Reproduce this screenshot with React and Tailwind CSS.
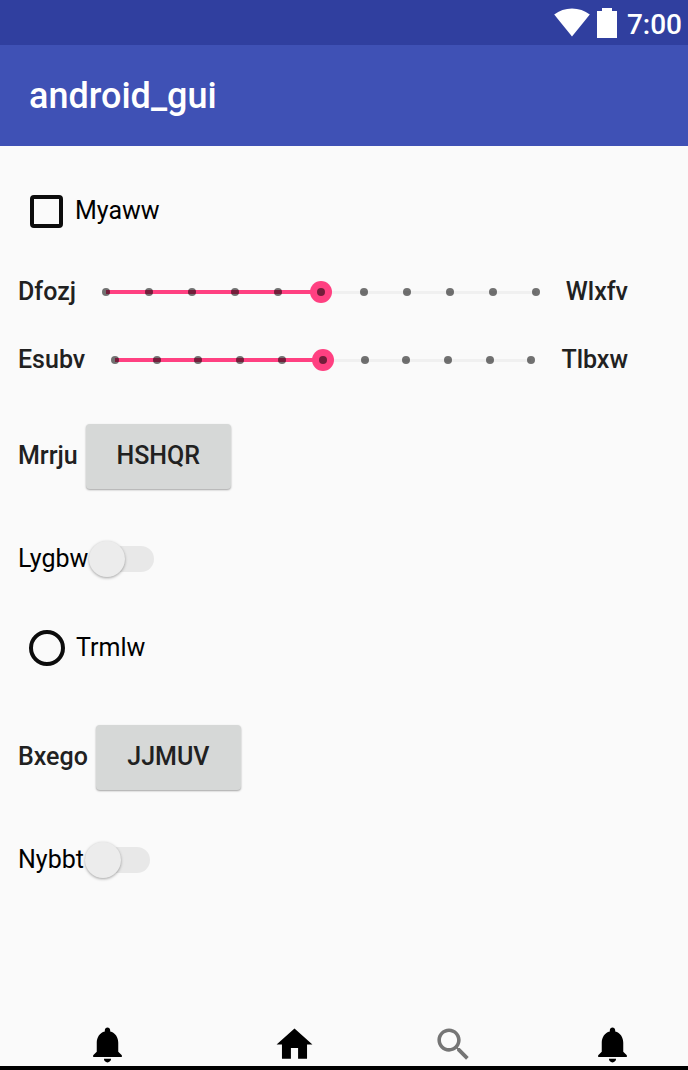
import { useState } from "react";

const BELL =
  "M12 22c1.1 0 2-.9 2-2h-4c0 1.1.9 2 2 2zm6-6v-5c0-3.07-1.63-5.64-4.5-6.32V4c0-.83-.67-1.5-1.5-1.5s-1.5.67-1.5 1.5v.68C7.64 5.36 6 7.92 6 11v5l-2 2v1h16v-1l-2-2z";
const HOME = "M10 20v-6h4v6h5v-8h3L12 3 2 12h3v8z";
const SEARCH =
  "M15.5 14h-.79l-.28-.27C15.41 12.59 16 11.11 16 9.5 16 5.91 13.09 3 9.5 3S3 5.91 3 9.5 5.91 16 9.5 16c1.61 0 3.09-.59 4.23-1.57l.27.28v.79l5 4.99L20.49 19l-4.99-5zm-6 0C7.01 14 5 11.99 5 9.5S7.01 5 9.5 5 14 7.01 14 9.5 11.99 14 9.5 14z";

function StatusBar() {
  return (
    <div className="flex h-[45px] items-center justify-end bg-[#303f9f] pr-[6px] text-white">
      <svg className="mr-[7px] h-[29px] w-9" viewBox="0 0 36 29" fill="currentColor" aria-hidden="true">
        <path d="M18 28.5 0.2 6.6C5.2 2.6 11.4 0.5 18 0.5s12.800 2.100 17.800 6.100z" />
      </svg>
      <svg className="mr-[10px] h-[30px] w-5" viewBox="0 0 20 30" fill="currentColor" aria-hidden="true">
        <path d="M5 0h10v3h5v27H0V3h5z" />
      </svg>
      <span className="pt-1 text-[28px] leading-8 font-medium">7:00</span>
    </div>
  );
}

function DiscreteSlider({ start, end }) {
  const [value, setValue] = useState(5);
  return (
    <div className="flex h-[68px] items-center gap-[19px] pr-[42px] font-medium text-[#212121]">
      <span>{start}</span>
      <div className="relative flex h-6 flex-1 items-center">
        <div className="absolute inset-x-[11px] h-[3px] bg-[#f0f0f0]" />
        <div className="absolute inset-x-[11px] h-1">
          <div className="h-full bg-[#ff4081]" style={{ width: `${value * 10}%` }} />
        </div>
        <input
          type="range"
          min="0"
          max="10"
          value={value}
          onChange={(e) => setValue(Number(e.target.value))}
          aria-label={`${start} to ${end}`}
          className="relative m-0 h-6 w-full cursor-pointer appearance-none bg-transparent [&::-webkit-slider-thumb]:size-[22px] [&::-webkit-slider-thumb]:appearance-none [&::-webkit-slider-thumb]:rounded-full [&::-webkit-slider-thumb]:bg-[#ff4081]"
        />
        <div className="pointer-events-none absolute inset-0 flex items-center justify-between px-[7px]">
          {Array.from({ length: 11 }, (_, i) => (
            <span key={i} className="size-2 rounded-full bg-black/55" />
          ))}
        </div>
      </div>
      <span>{end}</span>
    </div>
  );
}

function ButtonRow({ label, action }) {
  return (
    <div className="flex h-[66px] items-center gap-2 font-medium text-[#212121]">
      <span>{label}</span>
      <button
        type="button"
        className="h-[65px] w-[145px] rounded-[4px] bg-[#d6d8d7] shadow-[0_1px_2px_rgba(0,0,0,0.35)]"
      >
        {action}
      </button>
    </div>
  );
}

function SwitchRow({ label }) {
  return (
    <label className="flex h-10 w-fit cursor-pointer items-center text-black">
      <span>{label}</span>
      <input
        type="checkbox"
        role="switch"
        className="relative ml-[6px] h-[26px] w-[60px] cursor-pointer appearance-none rounded-full bg-[#e8e8e8] before:absolute before:top-[-5px] before:left-[-5px] before:size-9 before:rounded-full before:bg-[#ececec] before:shadow-[0_1px_3px_rgba(0,0,0,0.35)] checked:bg-[#ff4081]/50 checked:before:left-[29px] checked:before:bg-[#ff4081]"
      />
    </label>
  );
}

function NavButton({ label, path, className }) {
  return (
    <button type="button" aria-label={label} className={className}>
      <svg className="size-[43px]" viewBox="0 0 24 24" fill="currentColor" aria-hidden="true">
        <path d={path} />
      </svg>
    </button>
  );
}

export default function App() {
  return (
    <div className="flex min-h-screen flex-col bg-[#fafafa] font-['Roboto',sans-serif] text-[25px] leading-8">
      <StatusBar />
      <header className="flex h-[101px] items-center bg-[#3f51b5] px-[29px]">
        <h1 className="text-[36px] leading-10 font-medium text-white">android_gui</h1>
      </header>
      <main className="flex flex-1 flex-col px-[18px] pt-9">
        <label className="flex h-[58px] w-fit cursor-pointer items-center gap-3 pl-3 text-black">
          <input
            type="checkbox"
            className="size-[33px] cursor-pointer appearance-none rounded-[4px] border-4 border-[#0c0c0c] checked:bg-[#ff4081]"
          />
          <span>Myaww</span>
        </label>
        <div className="mt-[18px]">
          <DiscreteSlider start="Dfozj" end="Wlxfv" />
          <DiscreteSlider start="Esubv" end="Tlbxw" />
        </div>
        <div className="mt-[29px] flex flex-col gap-[50px]">
          <ButtonRow label="Mrrju" action="HSHQR" />
          <SwitchRow label="Lygbw" />
        </div>
        <label className="mt-10 flex h-[58px] w-fit cursor-pointer items-center gap-[11px] pl-[11px] text-black">
          <input
            type="radio"
            name="trmlw"
            className="size-9 cursor-pointer appearance-none rounded-full border-4 border-[#0c0c0c] checked:bg-[#ff4081]"
          />
          <span>Trmlw</span>
        </label>
        <div className="mt-[47px] flex flex-col gap-[50px]">
          <ButtonRow label="Bxego" action="JJMUV" />
          <SwitchRow label="Nybbt" />
        </div>
      </main>
      <nav className="flex items-center justify-between border-b-4 border-black pr-[54px] pl-[86px] text-black">
        <NavButton label="Notifications" path={BELL} className="pr-7" />
        <NavButton label="Home" path={HOME} />
        <NavButton label="Search" path={SEARCH} className="text-[#757575]" />
        <NavButton label="Alerts" path={BELL} />
      </nav>
    </div>
  );
}
